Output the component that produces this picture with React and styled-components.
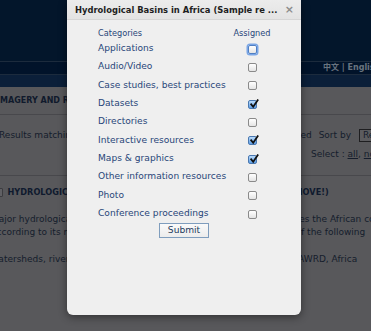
import React from "react";
import styled, { createGlobalStyle } from "styled-components";

const categories = [
  { name: "Applications", checked: false, focused: true },
  { name: "Audio/Video", checked: false },
  { name: "Case studies, best practices", checked: false },
  { name: "Datasets", checked: true },
  { name: "Directories", checked: false },
  { name: "Interactive resources", checked: true },
  { name: "Maps & graphics", checked: true },
  { name: "Other information resources", checked: false },
  { name: "Photo", checked: false },
  { name: "Conference proceedings", checked: false },
];

const GlobalStyle = createGlobalStyle`
  html, body {
    margin: 0;
    padding: 0;
  }
  body {
    width: 371px;
    height: 331px;
    overflow: hidden;
    background: #58585b;
    font-family: "DejaVu Sans", Verdana, sans-serif;
  }
  #root {
    position: relative;
    width: 371px;
    height: 331px;
    overflow: hidden;
  }
`;

const App = () => {
  return (
    <>
      <GlobalStyle />
      <Page>
        <Banner />
        <LangBar>中文 | English</LangBar>
        <NavBand />
        <SectionHeader>IMAGERY AND RESOURCES</SectionHeader>
        <ResultsBlock>
          <ResultsRow>
            <span>Results matching your query</span>
            <SortGroup>
              <span>1 record displayed</span>
              <SortLabel>Sort by</SortLabel>
              <FakeSelect>Relevance</FakeSelect>
            </SortGroup>
          </ResultsRow>
          <SelectRow>
            Select : <u>all</u>, <u>none</u>
          </SelectRow>
        </ResultsBlock>
        <Record>
          <RecordTitle>
            <RecordBox />
            HYDROLOGICAL BASINS IN AFRICA (TEST RECORD - PLEASE REMOVE!)
          </RecordTitle>
          <Abstract>
            Major hydrological basins of Africa. This GIS polygon dataset describes the African continent
            <br />
            according to its main drainage basins and the extent of each basin of the following
          </Abstract>
          <Keywords>
            watersheds, rivers, lakes, hydrology, basins, FAO, Water Resources, AWRD, Africa
          </Keywords>
        </Record>
      </Page>

      <Dialog>
        <TitleBar>
          <Title>Hydrological Basins in Africa (Sample re ...</Title>
          <Close>×</Close>
        </TitleBar>
        <Table>
          <HeadCell>Categories</HeadCell>
          <HeadCell $center>Assigned</HeadCell>
          {categories.map((c) => (
            <React.Fragment key={c.name}>
              <NameCell>{c.name}</NameCell>
              <BoxCell>
                <Box $checked={c.checked} $focused={c.focused}>
                  {c.checked && (
                    <Check viewBox="0 0 10 10">
                      <path d="M1.6 4.6 L4.2 7.8 L9.2 0.4" />
                    </Check>
                  )}
                </Box>
              </BoxCell>
            </React.Fragment>
          ))}
        </Table>
        <Actions>
          <Submit>Submit</Submit>
        </Actions>
      </Dialog>
    </>
  );
};

const Page = styled.div`
  width: 450px;
  margin-left: -10px;
  min-height: 331px;
  background: #58585b;
  color: #151d2c;
  font-size: 9px;
`;

const Banner = styled.div`
  height: 61px;
  background: #03162b;
  border-bottom: 1px solid #1c2b3d;
`;

const LangBar = styled.div`
  height: 12px;
  line-height: 12px;
  padding-left: 333px;
  background: #01132a;
  border-bottom: 1px solid #1c2b3d;
  color: #69737f;
  font-weight: bold;
  font-size: 8px;
  font-family: "DejaVu Sans", "Noto Sans CJK SC", sans-serif;
  white-space: nowrap;
`;

const NavBand = styled.div`
  height: 12px;
  background: #0b1f39;
`;

const SectionHeader = styled.div`
  height: 27px;
  line-height: 27px;
  padding-left: 7px;
  border-bottom: 1px solid #48484c;
  color: #101a2c;
  font-weight: bold;
  font-size: 8px;
  white-space: nowrap;
`;

const ResultsBlock = styled.div`
  padding: 14px 10px 15px 9px;
  border-bottom: 1px solid #48484c;
`;

const ResultsRow = styled.div`
  display: flex;
  justify-content: space-between;
  align-items: center;
  height: 12px;
  white-space: nowrap;
`;

const SortGroup = styled.div`
  display: flex;
  align-items: center;
`;

const SortLabel = styled.span`
  margin-left: 7px;
`;

const FakeSelect = styled.div`
  margin-left: 8px;
  width: 66px;
  height: 11px;
  line-height: 11px;
  padding-left: 3px;
  border: 1px solid #1e1e20;
  background: #5c5c5f;
`;

const SelectRow = styled.div`
  margin-top: 7px;
  height: 12px;
  line-height: 12px;
  padding-left: 312px;
  white-space: nowrap;
`;

const Record = styled.div`
  padding: 11px 0 0 1px;
`;

const RecordTitle = styled.div`
  display: flex;
  align-items: center;
  height: 10px;
  color: #0f1a2e;
  font-weight: bold;
  font-size: 8.2px;
  white-space: nowrap;
`;

const RecordBox = styled.span`
  width: 7px;
  height: 7px;
  margin: 0 4.5px 0 3px;
  border: 1px solid #3c3c40;
  border-radius: 1px;
  background: #606064;
`;

const Abstract = styled.p`
  margin: 16px 0 0;
  line-height: 13px;
  white-space: nowrap;
`;

const Keywords = styled.p`
  margin: 14px 0 0;
  line-height: 13px;
  white-space: nowrap;
`;

const Dialog = styled.div`
  position: absolute;
  left: 67px;
  top: 0;
  width: 234px;
  height: 315px;
  background: #efefef;
  border-radius: 0 0 6px 6px;
  box-shadow: 0 2px 9px rgba(0, 0, 0, 0.45);
`;

const TitleBar = styled.div`
  display: flex;
  align-items: center;
  justify-content: space-between;
  height: 19px;
  padding: 0 7px 0 8px;
  background: linear-gradient(#ececec, #e3e3e3);
  border-bottom: 1px solid #d6d6d6;
`;

const Title = styled.span`
  color: #1e1e1e;
  font-weight: bold;
  font-size: 8.4px;
  white-space: nowrap;
`;

const Close = styled.span`
  color: #8c8c8c;
  font-weight: bold;
  font-size: 11px;
  line-height: 11px;
`;

const Table = styled.div`
  display: grid;
  grid-template-columns: 134px 40px;
  grid-template-rows: 13px repeat(10, 18.33px);
  align-items: center;
  margin-top: 6px;
  padding-left: 31px;
  color: #284679;
`;

const HeadCell = styled.div`
  font-size: 8.2px;
  text-align: ${({ $center }) => ($center ? "center" : "left")};
  white-space: nowrap;
`;

const NameCell = styled.div`
  font-size: 9.1px;
  white-space: nowrap;
`;

const BoxCell = styled.div`
  display: flex;
  justify-content: center;
  padding-top: 2px;
`;

const Box = styled.span`
  position: relative;
  box-sizing: border-box;
  width: 9px;
  height: 9px;
  border-radius: 2px;
  border: 1px solid ${({ $checked, $focused }) =>
    $focused ? "#4f7fc4" : $checked ? "#4a78b0" : "#8a8a8a"};
  background: ${({ $checked }) =>
    $checked
      ? "linear-gradient(#b9dafa, #5f9fe6)"
      : "linear-gradient(#ffffff, #e4e4e4)"};
  box-shadow: ${({ $focused }) =>
    $focused ? "0 0 0 1.5px #7aa6e6" : "none"};
`;

const Check = styled.svg`
  position: absolute;
  left: 0;
  top: -2px;
  width: 10px;
  height: 10px;
  fill: none;
  stroke: #111;
  stroke-width: 1.7;
`;

const Actions = styled.div`
  display: flex;
  justify-content: center;
  margin-top: 1px;
`;

const Submit = styled.button`
  box-sizing: border-box;
  width: 50px;
  height: 15px;
  padding: 0;
  border: 1px solid #7f9dbd;
  background: linear-gradient(#fafafa, #ececec);
  color: #233a5c;
  font-family: "DejaVu Sans", Verdana, sans-serif;
  font-size: 9.1px;
  line-height: 13px;
`;

export default App;
